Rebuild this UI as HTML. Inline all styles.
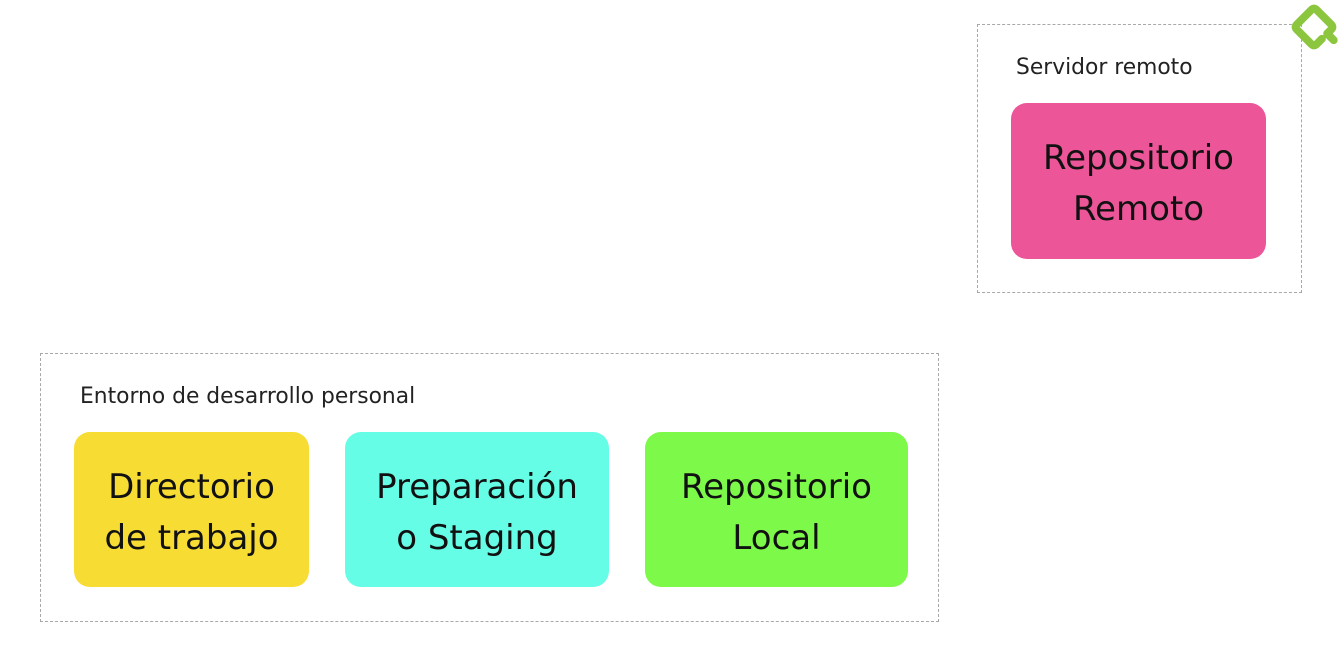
<!DOCTYPE html>
<html><head><style>
body{margin:0;width:1342px;height:649px;background:#fff;position:relative;overflow:hidden;font-family:"DejaVu Sans",sans-serif;color:#1a1a1a}
.box{position:absolute;border:1px dashed #a8a8a8}
.lbl{position:absolute;font-size:21.8px;color:#222;line-height:26px}
.card{position:absolute;border-radius:16px;display:flex;align-items:center;justify-content:center;text-align:center;font-size:34px;line-height:51px;color:#111;box-sizing:border-box;padding-top:6px}
</style></head><body>
<div class="box" style="left:40px;top:353px;width:897px;height:267px"></div>
<div class="lbl" style="left:80px;top:384px">Entorno de desarrollo personal</div>
<div class="card" style="left:74px;top:432px;width:235px;height:155px;background:#f7dc34">Directorio<br>de trabajo</div>
<div class="card" style="left:345px;top:432px;width:264px;height:155px;background:#66fde6">Preparación<br>o Staging</div>
<div class="card" style="left:645px;top:432px;width:263px;height:155px;background:#7df94a">Repositorio<br>Local</div>
<div class="box" style="left:977px;top:24px;width:323px;height:267px"></div>
<div class="lbl" style="left:1016px;top:55px">Servidor remoto</div>
<div class="card" style="left:1011px;top:103px;width:255px;height:156px;background:#ec5598">Repositorio<br>Remoto</div>
<svg style="position:absolute;left:1289px;top:2px" width="50" height="50" viewBox="6 5 38 38">
<path d="M31 38 L27 42 Q25 44 23 42 L12 31 Q10 29 12 27 L23 16 Q25 14 27 16 L38 27 Q40 29 38 31 L35 34 L40 39" fill="none" stroke="#8cc63f" stroke-width="6" stroke-linejoin="round" stroke-linecap="round" transform="translate(0,-5)"/>
</svg>
</body></html>
